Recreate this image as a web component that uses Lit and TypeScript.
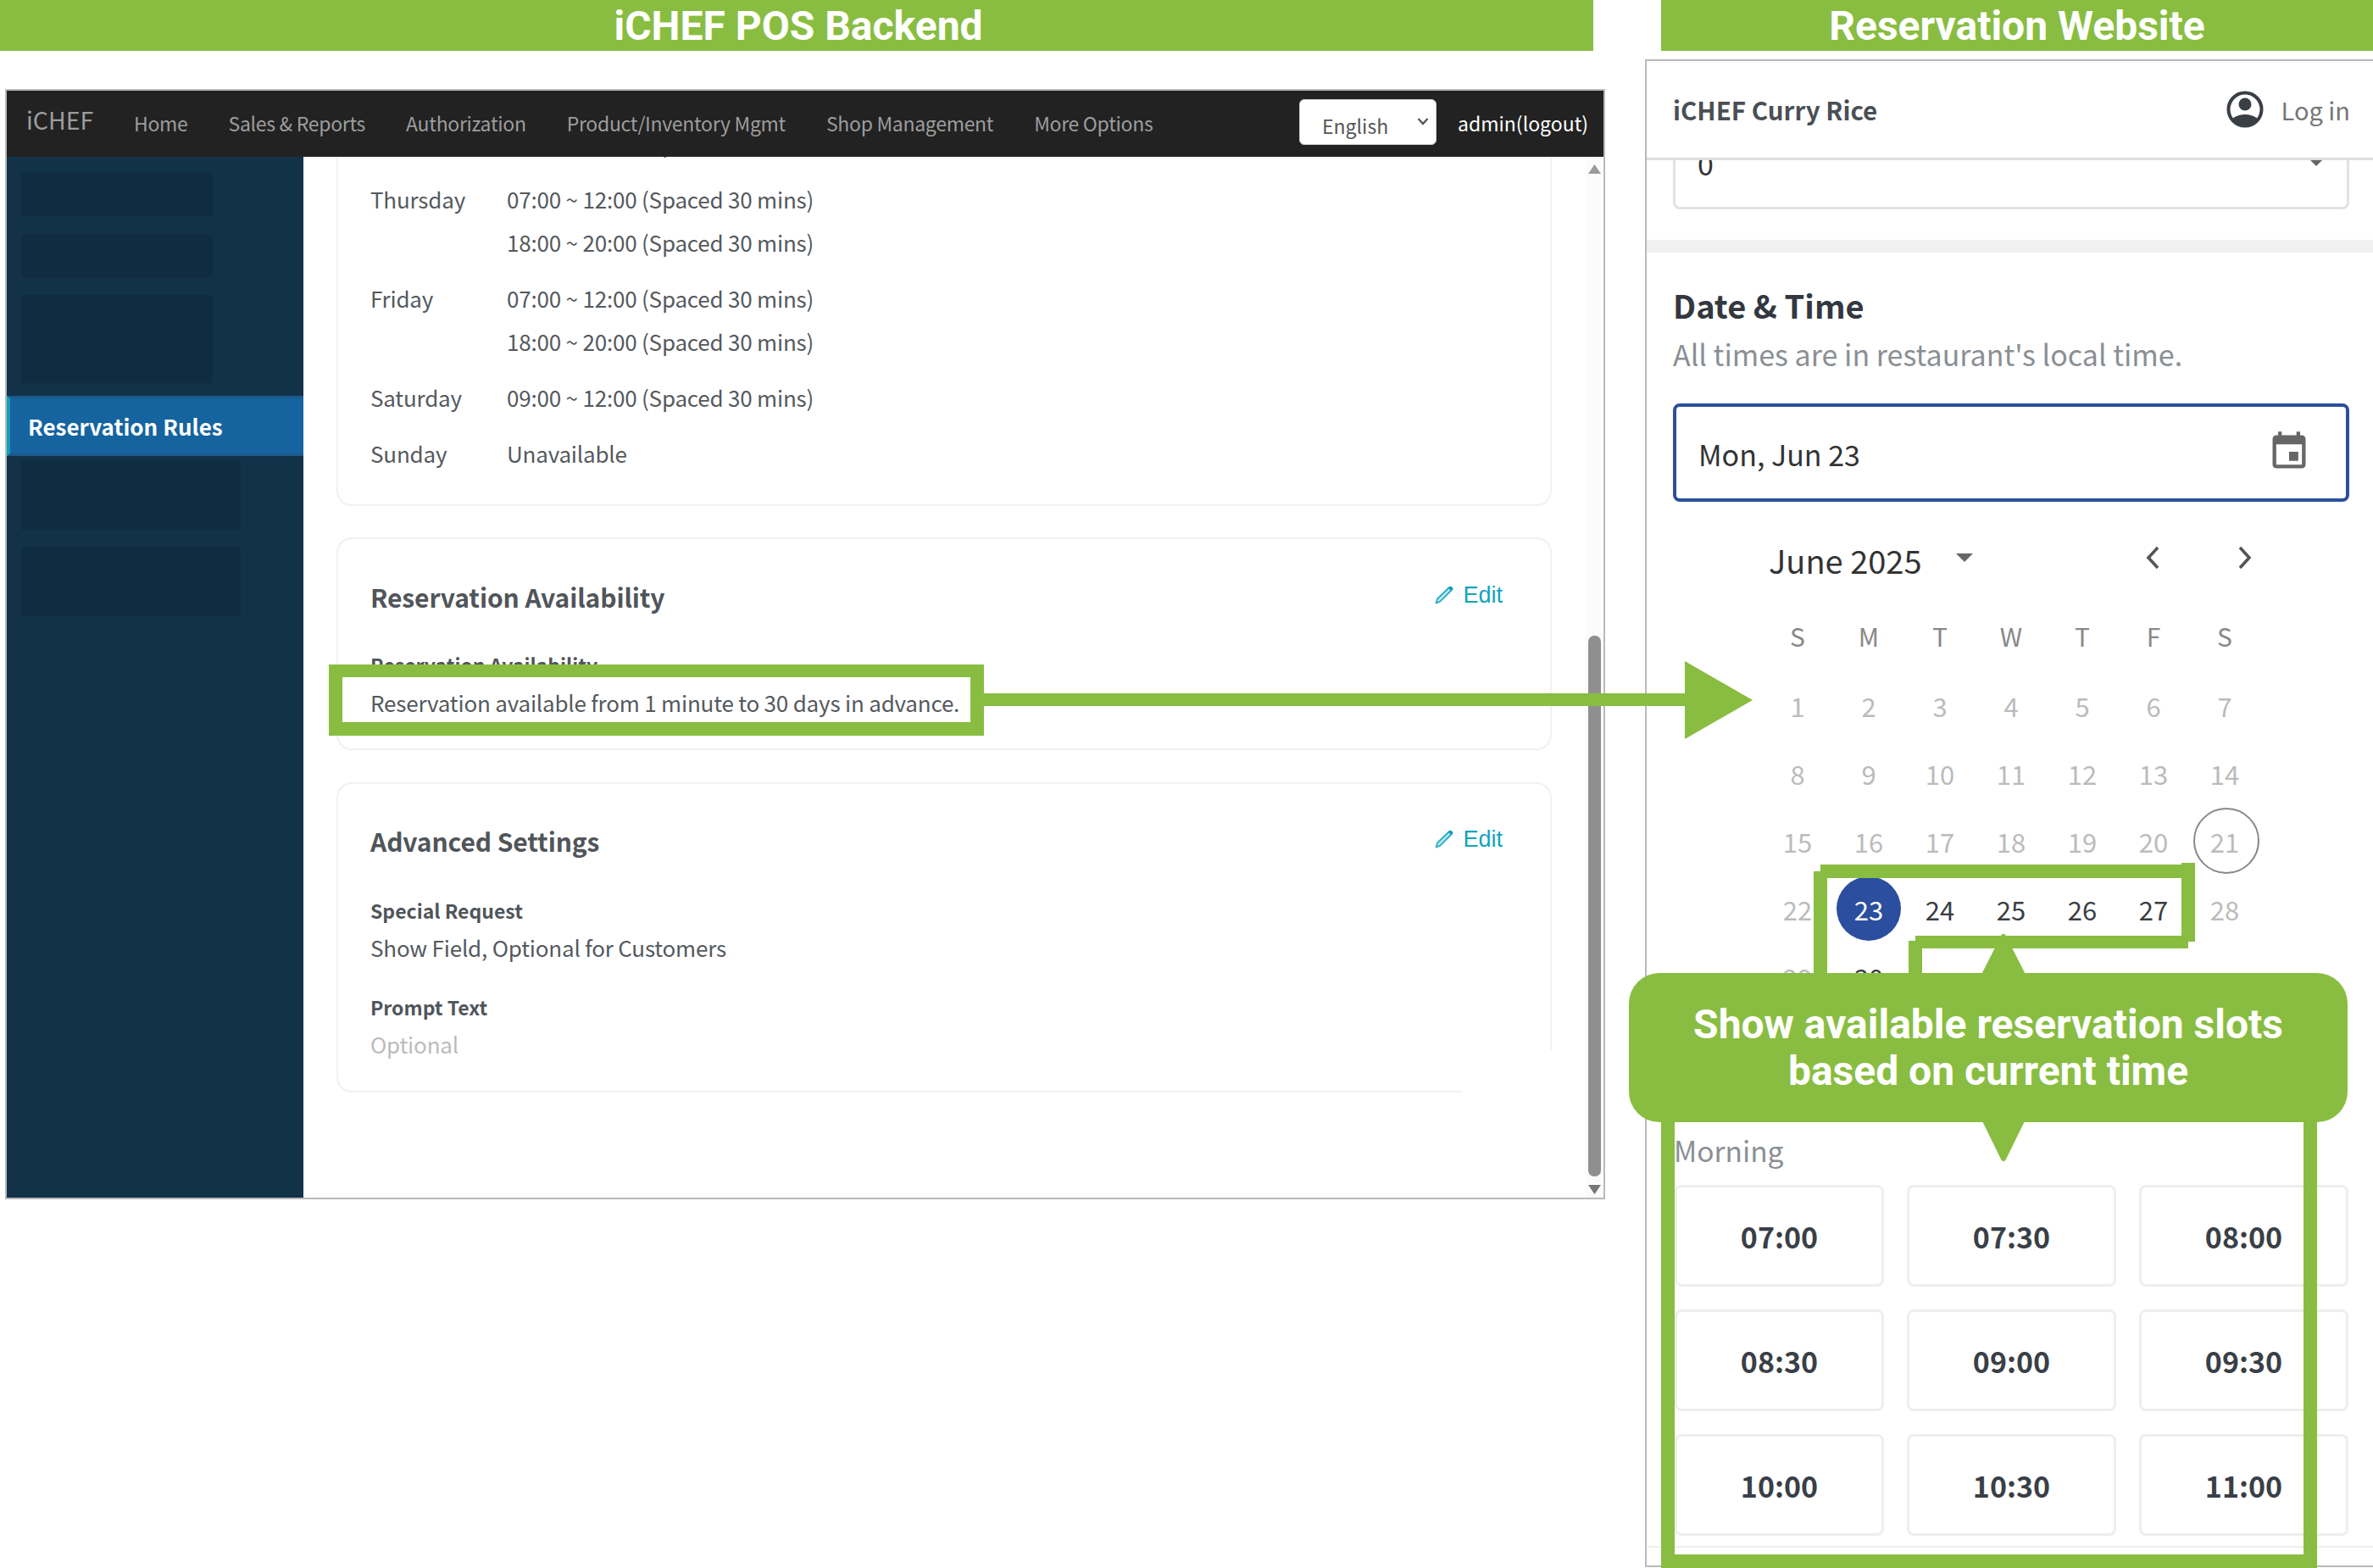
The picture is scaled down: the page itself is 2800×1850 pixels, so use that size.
import { LitElement, html, css, svg } from "lit";
import { customElement } from "lit/decorators.js";

const SCHEDULE: [string, string[]][] = [
  ["", ["18:00 ~ 20:00 (Spaced 30 mins)"]],
  ["Thursday", ["07:00 ~ 12:00 (Spaced 30 mins)", "18:00 ~ 20:00 (Spaced 30 mins)"]],
  ["Friday", ["07:00 ~ 12:00 (Spaced 30 mins)", "18:00 ~ 20:00 (Spaced 30 mins)"]],
  ["Saturday", ["09:00 ~ 12:00 (Spaced 30 mins)"]],
  ["Sunday", ["Unavailable"]],
];
const NAV = ["Home", "Sales & Reports", "Authorization", "Product/Inventory Mgmt", "Shop Management", "More Options"];
const WEEK = ["S", "M", "T", "W", "T", "F", "S"];
const SLOTS = ["07:00", "07:30", "08:00", "08:30", "09:00", "09:30", "10:00", "10:30", "11:00"];

const pencil = html`<svg class="pencil" viewBox="0 0 22 22" width="22" height="22">
  <path d="M1.5 20.5 L3 15.5 L16.5 2.5 L19.5 5.5 L6 18.8 Z" fill="#bfe6ee" stroke="#29aec6" stroke-width="1.8" stroke-linejoin="round"></path>
  <path d="M16 1.5 L20.5 6 L21.5 3 L19 0.8 Z" fill="#0e93ad"></path>
</svg>`;

@customElement("app-root")
export class AppRoot extends LitElement {
  static styles = css`
    :host { display: block; width: 2800px; height: 1850px; position: relative; overflow: hidden; background: #fff;
      font-family: "Noto Sans CJK TC", "Noto Sans", sans-serif; color: #54595e; }
    * { box-sizing: border-box; }
    .page { display: flex; width: 2800px; height: 1850px; }
    .left { width: 1941px; flex: none; }
    .right { flex: 1; min-width: 0; }
    .banner { height: 60px; background: #89bd41; color: #fff; font: 700 48px/62px Roboto, sans-serif; text-align: center; }
    .left .banner { width: 1880px; padding-left: 4px; }
    .right .banner { margin-left: 19px; }

    .win { margin: 45px 0 0 6px; width: 1888px; height: 1310px; border: 2px solid #b9b9b9; display: flex; flex-direction: column; background: #fff; }
    .nav { height: 78px; flex: none; background: #222; display: flex; align-items: center; color: #9d9d9d; font-size: 23px; letter-spacing: -0.3px; padding: 0 0 0 23px; }
    .brand { font-size: 28.5px; letter-spacing: 0; width: 127px; flex: none; margin-top: -12px; }
    .links { display: flex; gap: 48px; flex: 1; margin-top: -2px; }
    .lang { width: 162px; height: 54px; background: #fff; border-radius: 6px; margin: -4px 25px 0 0; display: flex; align-items: center; justify-content: space-between;
      padding: 8px 8px 0 26px; color: #555; letter-spacing: 0; border: 1px solid #ccc; }
    .lang svg { margin-top: -10px; }
    .admin { color: #fff; font-size: 23px; letter-spacing: 0; width: 172px; flex: none; margin-top: -2px; }
    .body { flex: 1; min-height: 0; display: flex; }
    .side { width: 350px; flex: none; background: #12324a; padding-top: 19px; display: flex; flex-direction: column; }
    .ph { background: #102c40; margin-left: 17px; width: 226px; }
    .ph.w { width: 259px; }
    .active { height: 71px; margin-top: 15px; background: #15649f; border-left: 4px solid #12a0b5; border-top: 3px solid #1c5a8c; border-bottom: 3px solid #1c5a8c;
      color: #fff; font-weight: 700; font-size: 26px; padding-left: 21px; display: flex; align-items: center; }
    .main { flex: 1; min-width: 0; overflow: hidden; position: relative; padding: 0 40px 0 39px; }
    .card { border: 2px solid #f1f1f1; border-radius: 18px; padding: 0 56px 0 38px; }
    .card.first { margin-top: -42px; border-top: 0; padding-bottom: 35px; }
    .sched { display: flex; flex-direction: column; gap: 15px; font-size: 26px; letter-spacing: -0.2px; line-height: 51px; }
    .row { display: flex; }
    .day { width: 161px; flex: none; }
    .card.two { margin-top: 37px; padding-top: 46px; padding-bottom: 34px; }
    .card.three { margin-top: 38px; padding-top: 45px; padding-bottom: 35px; }
    .head { display: flex; justify-content: space-between; align-items: center; }
    h3 { margin: 0; font-size: 30px; letter-spacing: -0.1px; line-height: 44px; font-weight: 700; color: #50555a; }
    .edit { display: flex; align-items: center; gap: 11px; color: #0fa4bd; font: 27px/32px "Liberation Sans", Arial, sans-serif; margin-top: -4px; }
    .lab { font-size: 23px; line-height: 34px; font-weight: 700; color: #50555a; }
    .val { font-size: 26px; letter-spacing: -0.2px; line-height: 40px; }
    .mute { color: #bbb; }
    .patch { position: absolute; left: 1366px; top: 1055px; width: 110px; height: 60px; background: #fff; }
    .track { width: 21px; flex: none; background: #fbfbfb; display: flex; flex-direction: column; align-items: center; }
    .track .up { margin-top: 9px; }
    .thumb { width: 15px; height: 638px; background: #8f8f8f; border-radius: 7px; margin-top: 545px; }
    .track .down { margin-top: 10px; }

    .rwin { margin-top: 10px; height: 1779px; border: 2px solid #b9b9b9; border-right: 0; display: flex; flex-direction: column; overflow: hidden; background: #fff; }
    .rhead { height: 117px; flex: none; border-bottom: 3px solid #ddd; display: flex; align-items: center; padding: 0 27px 0 31px; background: #fff; position: relative; z-index: 1; }
    .shop { font-size: 29.5px; font-weight: 700; color: #4a4f55; flex: 1; }
    .login { font-size: 29px; color: #777; margin-left: 21px; }
    .scroll { flex: 1; min-height: 0; overflow: hidden; }
    .sel { margin: -58px 28px 0 31px; height: 116px; border: 3px solid #e2e2e2; border-radius: 8px; display: flex; align-items: center; justify-content: space-between; padding: 6px 28px 0 26px; font-size: 34px; color: #333; }
    .band { margin-top: 36px; height: 15px; background: #f0f0f0; }
    .pad { padding: 0 28px 0 31px; }
    h2 { margin: 37px 0 0; font-size: 38px; line-height: 50px; font-weight: 700; color: #33383f; }
    .sub { margin-top: 9px; font-size: 34px; line-height: 48px; color: #8a8f94; }
    .date { margin-top: 34px; height: 116px; border: 4px solid #2b4f9e; border-radius: 8px; display: flex; align-items: center; justify-content: space-between; padding: 0 41px 0 26px; font-size: 34px; color: #333; }
    .date span { margin-top: 2px; }
    .date svg { margin-top: -2px; }
    .cal { margin: 43px 0 0 105px; width: 590px; }
    .calhead { display: flex; align-items: center; height: 50px; font-size: 38px; color: #333; padding-left: 8px; }
    .caret { margin-left: 40px; margin-top: -4px; }
    .chev { margin-left: auto; display: flex; gap: 70px; margin-top: -4px; }
    .week, .days { display: grid; grid-template-columns: repeat(7, 84px); text-align: center; }
    .week { margin-top: 45px; font-size: 30px; line-height: 40px; color: #888; }
    .days { margin-top: 22px; grid-auto-rows: 80px; font-size: 31px; color: #bbb; }
    .d { display: flex; align-items: center; justify-content: center; position: relative; }
    .d.on { color: #3a3d42; }
    .d.pick { color: #fff; }
    .d.pick::before { content: ""; position: absolute; left: 4px; top: 2px; width: 76px; height: 76px; border-radius: 50%; background: #2b4f9e; }
    .d.today::before { content: ""; position: absolute; left: 5px; top: 1px; width: 74px; height: 74px; border-radius: 50%; border: 2px solid #888; }
    .d b { font-weight: 400; position: relative; }
    .morning { margin-top: 141px; font-size: 33.5px; line-height: 48px; color: #8a8f94; padding-left: 1px; }
    .slots { margin: 17px 0 0 2px; display: grid; grid-template-columns: repeat(3, 247px); gap: 27px; }
    .slot { height: 120px; border: 3px solid #eee; border-radius: 8px; display: flex; align-items: center; justify-content: center; font-size: 34px; font-weight: 700; color: #3a3f47; }
    .sep { margin-top: 12px; height: 2px; background: #eee; }

    .ann { position: absolute; left: 0; top: 0; width: 2800px; height: 1850px; pointer-events: none; }
    .callout { position: absolute; left: 1922px; top: 1148px; width: 848px; height: 176px; border-radius: 36px; background: #89bd41; color: #fff; display: flex; align-items: center; justify-content: center;
      text-align: center; font: 700 48px/55px Roboto, sans-serif; }
  `;

  render() {
    const days = Array.from({ length: 30 }, (_, i) => i + 1);
    return html`
      <div class="page">
        <section class="left">
          <div class="banner">iCHEF POS Backend</div>
          <div class="win">
            <div class="nav">
              <div class="brand">iCHEF</div>
              <div class="links">${NAV.map((n) => html`<span>${n}</span>`)}</div>
              <div class="lang"><span>English</span>
                <svg width="14" height="10" viewBox="0 0 14 10"><path d="M1.5 2 L7 8 L12.5 2" fill="none" stroke="#555" stroke-width="2.4"></path></svg>
              </div>
              <div class="admin">admin(logout)</div>
            </div>
            <div class="body">
              <nav class="side">
                <div class="ph" style="height:51px"></div>
                <div class="ph" style="height:52px;margin-top:21px"></div>
                <div class="ph" style="height:104px;margin-top:20px"></div>
                <div class="active">Reservation Rules</div>
                <div class="ph w" style="height:81px;margin-top:6px"></div>
                <div class="ph w" style="height:82px;margin-top:20px"></div>
              </nav>
              <main class="main">
                <div class="card first">
                  <div class="sched">
                    ${SCHEDULE.map(
                      ([d, t]) => html`<div class="row"><div class="day">${d}</div><div>${t.map((x) => html`<div>${x}</div>`)}</div></div>`
                    )}
                  </div>
                </div>
                <div class="card two">
                  <div class="head"><h3>Reservation Availability</h3><div class="edit">${pencil}<span>Edit</span></div></div>
                  <div class="lab" style="margin-top:41px">Reservation Availability</div>
                  <div class="val" style="margin-top:8px">Reservation available from 1 minute to 30 days in advance.</div>
                </div>
                <div class="card three">
                  <div class="head"><h3>Advanced Settings</h3><div class="edit">${pencil}<span>Edit</span></div></div>
                  <div class="lab" style="margin-top:43px">Special Request</div>
                  <div class="val" style="margin-top:7px">Show Field, Optional for Customers</div>
                  <div class="lab" style="margin-top:33px">Prompt Text</div>
                  <div class="val mute" style="margin-top:7px">Optional</div>
                </div>
                <div class="patch"></div>
              </main>
              <div class="track">
                <svg class="up" width="15" height="11" viewBox="0 0 15 11"><path d="M7.5 0 L15 11 H0 Z" fill="#999"></path></svg>
                <div class="thumb"></div>
                <svg class="down" width="15" height="11" viewBox="0 0 15 11"><path d="M7.5 11 L15 0 H0 Z" fill="#777"></path></svg>
              </div>
            </div>
          </div>
        </section>
        <section class="right">
          <div class="banner">Reservation Website</div>
          <div class="rwin">
            <header class="rhead">
              <div class="shop">iCHEF Curry Rice</div>
              <svg width="44" height="44" viewBox="0 0 44 44">
                <defs><clipPath id="c"><circle cx="22" cy="22" r="19"></circle></clipPath></defs>
                <circle cx="22" cy="22" r="19.5" fill="none" stroke="#3a3f45" stroke-width="4"></circle>
                <circle cx="22" cy="16" r="7.5" fill="#3a3f45"></circle>
                <ellipse cx="22" cy="40" rx="18" ry="12" fill="#3a3f45" clip-path="url(#c)"></ellipse>
              </svg>
              <span class="login">Log in</span>
            </header>
            <div class="scroll">
              <div class="sel"><span>0</span>
                <svg width="16" height="8" viewBox="0 0 16 8"><path d="M0 0 H16 L8 8 Z" fill="#666"></path></svg>
              </div>
              <div class="band"></div>
              <div class="pad">
                <h2>Date &amp; Time</h2>
                <div class="sub">All times are in restaurant's local time.</div>
                <div class="date"><span>Mon, Jun 23</span>
                  <svg width="52" height="52" viewBox="0 0 24 24"><path fill="#666" d="M17 12h-5v5h5v-5zM16 1v2H8V1H6v2H5c-1.11 0-1.99.9-1.99 2L3 19c0 1.1.89 2 2 2h14c1.1 0 2-.9 2-2V5c0-1.1-.9-2-2-2h-1V1h-2zm3 18H5V8h14v11z"></path></svg>
                </div>
                <div class="cal">
                  <div class="calhead">
                    <span>June 2025</span>
                    <svg class="caret" width="20" height="10" viewBox="0 0 20 10"><path d="M0 0 H20 L10 10 Z" fill="#666"></path></svg>
                    <div class="chev">
                      <svg width="40" height="30" viewBox="0 0 40 30"><path d="M27 3 L16 15 L27 27" fill="none" stroke="#555" stroke-width="3.6"></path></svg>
                      <svg width="40" height="30" viewBox="0 0 40 30"><path d="M14 3 L25 15 L14 27" fill="none" stroke="#555" stroke-width="3.6"></path></svg>
                    </div>
                  </div>
                  <div class="week">${WEEK.map((w) => html`<div>${w}</div>`)}</div>
                  <div class="days">
                    ${days.map((d) => {
                      const cls = d === 23 ? "pick" : d === 21 ? "today" : (d >= 24 && d <= 27) || d === 30 ? "on" : "";
                      return html`<div class="d ${cls}"><b>${d}</b></div>`;
                    })}
                  </div>
                </div>
                <div class="morning">Morning</div>
                <div class="slots">${SLOTS.map((s) => html`<div class="slot">${s}</div>`)}</div>
              </div>
              <div class="sep"></div>
            </div>
          </div>
        </section>
      </div>
      <svg class="ann" viewBox="0 0 2800 1850">
        ${svg`
          <g fill="#89bd41">
            <path fill-rule="evenodd" d="M388 784 H1161 V868 H388 Z M404 799 V852 H1145 V799 Z"></path>
            <rect x="1161" y="818" width="827" height="15"></rect>
            <polygon points="1988,780 2068,826 1988,872"></polygon>
            <rect x="2148" y="1020" width="430" height="16"></rect>
            <rect x="2140" y="1028" width="16" height="130"></rect>
            <rect x="2574" y="1018" width="16" height="93"></rect>
            <rect x="2260" y="1104" width="322" height="15"></rect>
            <rect x="2252" y="1110" width="16" height="48"></rect>
            <polygon points="2364,1105 2336,1160 2392,1160" stroke="#89bd41" stroke-width="6" stroke-linejoin="round"></polygon>
            <polygon points="2364,1367 2336,1310 2392,1310" stroke="#89bd41" stroke-width="6" stroke-linejoin="round"></polygon>
            <rect x="1960" y="1310" width="16" height="540"></rect>
            <rect x="2718" y="1310" width="16" height="540"></rect>
            <rect x="1960" y="1834" width="774" height="16"></rect>
          </g>
        `}
      </svg>
      <div class="callout"><div>Show available reservation slots<br />based on current time</div></div>
    `;
  }
}
